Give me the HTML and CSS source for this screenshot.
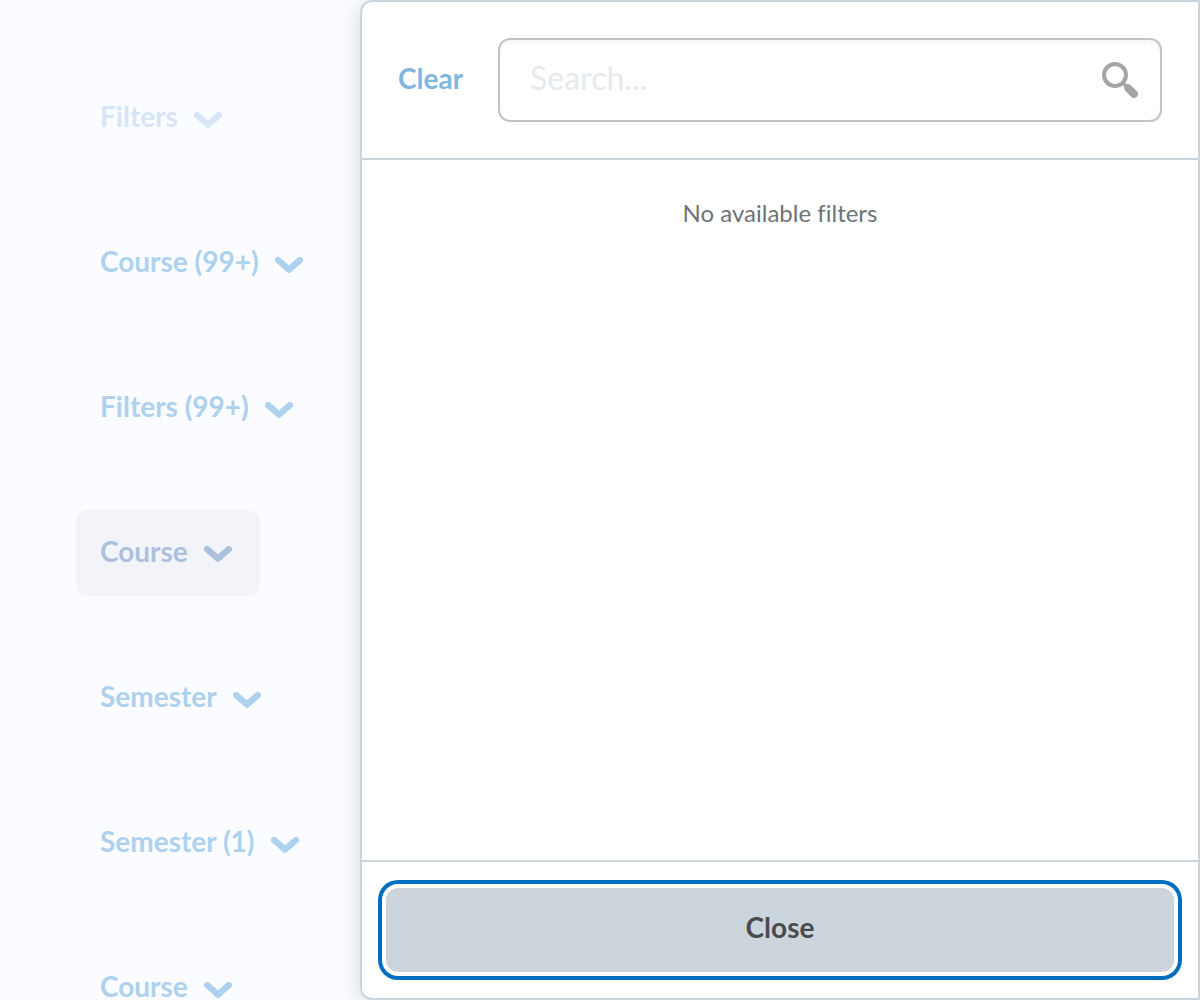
FILE: index.html
```html
<!DOCTYPE html>
<html lang="en">
<head>
<meta charset="utf-8">
<meta name="viewport" content="width=device-width, initial-scale=1">
<title>Filters</title>
<link rel="stylesheet" href="styles.css">
</head>
<body>
<svg width="0" height="0" class="sprite" aria-hidden="true">
  <symbol id="chevron" viewBox="0 0 28 16"><path d="M3.2 3.2 14 12.6 24.8 3.2" fill="none" stroke="currentColor" stroke-width="6.4" stroke-linecap="round" stroke-linejoin="round"/></symbol>
</svg>
<div class="layout">
  <nav class="openers" aria-label="Filters">
    <button class="opener" type="button" disabled>Filters <svg class="chevron"><use href="#chevron"/></svg></button>
    <button class="opener" type="button">Course (99+) <svg class="chevron"><use href="#chevron"/></svg></button>
    <button class="opener" type="button">Filters (99+) <svg class="chevron"><use href="#chevron"/></svg></button>
    <button class="opener opener-active" type="button" aria-expanded="true">Course <svg class="chevron"><use href="#chevron"/></svg></button>
    <button class="opener" type="button">Semester <svg class="chevron"><use href="#chevron"/></svg></button>
    <button class="opener" type="button">Semester (1) <svg class="chevron"><use href="#chevron"/></svg></button>
    <button class="opener" type="button">Course <svg class="chevron"><use href="#chevron"/></svg></button>
  </nav>
  <section class="panel">
    <header class="panel-header">
      <button class="clear" type="button">Clear</button>
      <div class="search">
        <input class="search-input" type="text" placeholder="Search..." aria-label="Search">
        <button class="search-button" type="button" aria-label="Search">
          <svg class="search-icon" viewBox="0 0 36 36"><circle cx="13" cy="13" r="11" fill="none" stroke="currentColor" stroke-width="4"/><path d="M20 22.6 22.6 20 24.6 22.2Q27.4 21.8 29 23.4L34.8 29.2A3.9 3.9 0 0 1 29.2 34.8L23.4 29Q21.8 27.4 22.2 24.6Z" fill="currentColor"/></svg>
        </button>
      </div>
    </header>
    <div class="panel-body"><p class="message">No available filters</p></div>
    <footer class="panel-footer"><button class="close" type="button">Close</button></footer>
  </section>
</div>
</body>
</html>
```
FILE: styles.css
```css
* { box-sizing: border-box; }
body {
  margin: 0;
  font-family: Lato, sans-serif;
  font-variant-ligatures: none;
  background: #fbfcff;
}
button {
  font: inherit;
  font-variant-ligatures: none;
  border: 0;
  padding: 0;
  background: none;
}
.sprite { display: block; }
.layout {
  display: grid;
  grid-template-columns: 30% 1fr;
  height: 100vh;
  overflow: hidden;
}
.openers {
  display: flex;
  flex-direction: column;
  align-items: flex-start;
  gap: 59px;
  padding: 75px 0 0 76px;
  min-height: 0;
}
.opener {
  display: flex;
  flex: none;
  align-items: center;
  gap: 16px;
  height: 86px;
  padding: 0 28px 4px 24px;
  border-radius: 12px;
  font-size: 28px;
  line-height: 36px;
  font-weight: 700;
  white-space: nowrap;
  color: #aed1ee;
}
.opener:disabled { color: #d6e6f6; }
.opener-active {
  color: #adc0dc;
  background: #f3f4fa;
}
.chevron {
  width: 28px;
  height: 16px;
  margin-top: 8px;
}
.opener-active .chevron { margin-top: 6px; }
.panel {
  display: flex;
  flex-direction: column;
  min-width: 0;
  border: 2px solid #cdd5dc;
  border-radius: 12px 0 0 12px;
  background: #fff;
  box-shadow: 0 4px 24px rgba(0, 0, 0, 0.15);
}
.panel-header {
  display: flex;
  align-items: center;
  gap: 35px;
  padding: 36px;
  border-bottom: 2px solid #cdd5dc;
}
.clear {
  padding-bottom: 4px;
  font-size: 28px;
  line-height: 36px;
  font-weight: 700;
  color: #7fb7df;
}
.search {
  display: flex;
  flex: 1;
  align-items: center;
  min-width: 0;
  height: 84px;
  padding: 0 22px 0 30px;
  border: 2px solid #c1c4c7;
  border-radius: 12px;
  box-shadow: inset 0 4px 0 #f8f9fa;
}
.search-input {
  flex: 1;
  min-width: 0;
  height: 48px;
  padding: 0 0 6px;
  border: 0;
  outline: 0;
  background: none;
  font: 400 32px/42px Lato, sans-serif;
}
.search-input::placeholder { color: #e6eaed; opacity: 1; }
.search-button { color: #a4a5a6; }
.search-icon {
  display: block;
  width: 36px;
  height: 36px;
}
.panel-body {
  flex: 1;
  padding: 35px 36px;
}
.message {
  margin: 0;
  font-size: 24px;
  line-height: 36px;
  text-align: center;
  color: #6e7376;
}
.panel-footer {
  padding: 26px 24px;
  border-top: 2px solid #cdd5dc;
}
.close {
  display: block;
  width: 100%;
  height: 84px;
  padding-bottom: 6px;
  border-radius: 12px;
  font-size: 28px;
  line-height: 36px;
  font-weight: 700;
  color: #494c4e;
  background: #cdd5dc;
  box-shadow: 0 0 0 4px #fff, 0 0 0 8px #006fbf;
}
```
